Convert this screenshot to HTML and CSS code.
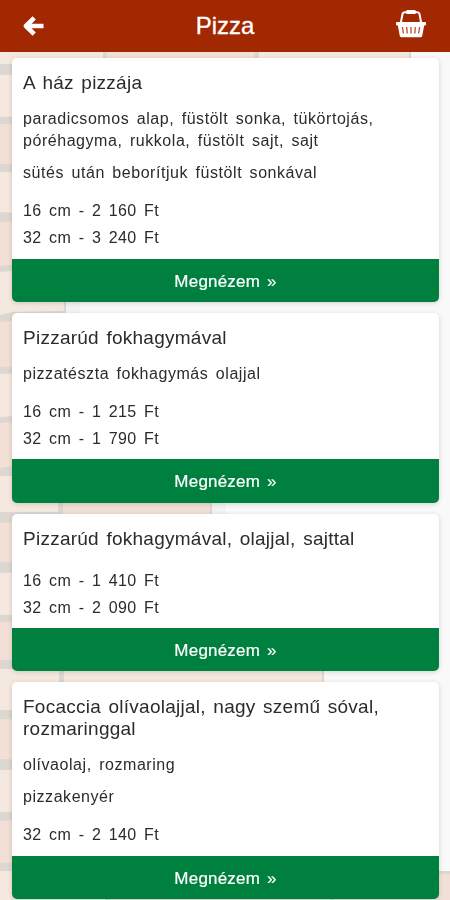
FILE: index.html
```html
<!DOCTYPE html>
<html lang="hu">
<head>
  <meta charset="UTF-8" />
  <meta name="viewport" content="width=device-width, initial-scale=1.0" />
  <title>Pizza</title>
  <link rel="stylesheet" href="styles.css">
</head>
<body>
  <!-- brick wall -->
  <svg class="wall" viewBox="0 0 450 900" preserveAspectRatio="none" aria-hidden="true">
    <path fill="#ddd7d2" d="M0 50h411v12H30v238h36v14H30v188h182v14H30v155h294v14H30v186h420v29H0z"/>
    <path fill="#f3f3f3" d="M66 300h14v14H66zM212 502h14v14H212z"/>
    <g fill="#f5e9df">
      <path d="M0 50h103v14H0zM259 50h150v10H259z"/>
      <path d="M0 75l30-1v42l-30 1zM0 172l30 1v41l-30-2z"/>
      <path d="M0 272l30-3h34v42l-52 1-12 3zM0 374l30-1v42l-30 2z"/>
      <path d="M0 476h58v36H0zM0 573l30-1v42l-30 1zM0 669h59v42l-59-1z"/>
      <path d="M64 669h258v14H64zM0 770l30-1v42l-30 1zM0 871h105v29H0z"/>
    </g>
    <g fill="#f2e0d6">
      <path d="M107 50h147v10H107zM0 124l30-1v42l-30-1zM0 222l30-2v43l-30 3z"/>
      <path d="M0 322l30-3v47l-30 1zM0 423l30-2v43l-30 4zM63 476h147v38H63z"/>
      <path d="M0 523l30-3v43l-30-1zM0 622l30-1v40l-30-1zM0 719l30 1v40l-30-1z"/>
      <path d="M0 821l30-2v43l-30 1zM110 871h220v29H110zM334 874h116v26H334z"/>
    </g>
  </svg>

  <header class="header">
    <a href="#" class="header-link" aria-label="Vissza">
      <svg class="icon-back" viewBox="0 0 21 22">
        <path d="M11.200 2.800L3 11l8.200 8.200M4 11h16.500" fill="none" stroke="#fff" stroke-width="4.600" stroke-linejoin="round"/>
      </svg>
    </a>
    <h1 class="header-title">Pizza</h1>
    <a href="#" class="header-link" aria-label="Kosár">
      <svg class="icon-basket" viewBox="0 0 30 28">
        <path d="M4.800 13L6.500 4Q6.800 2.200 8.600 2.200h12.800Q23.200 2.200 23.500 4l1.700 9" fill="none" stroke="#fff" stroke-width="2"/>
        <rect x="10" y="0" width="10" height="4" rx="1.500" fill="#fff"/>
        <path d="M1 12h28q1 0 1 1v1.500q0 1-1 1h-.8L26.200 26q-.3 1.300-1.600 1.300H5.400Q4.100 27.300 3.800 26L1.800 15.500H1q-1 0-1-1V13q0-1 1-1z" fill="#fff"/>
        <path d="M6.400 17l1 6.500M10.700 17l.5 6.500M15 17v6.500M19.300 17l-.5 6.500M23.600 17l-1 6.500" stroke="#b5502f" stroke-width="1.300"/>
      </svg>
    </a>
  </header>

  <main class="products">
    <article class="card">
      <div class="card-body">
        <h2 class="card-title">A ház pizzája</h2>
        <p class="card-text">paradicsomos alap, füstölt sonka, tükörtojás,<br>póréhagyma, rukkola, füstölt sajt, sajt</p>
        <p class="card-text">sütés után beborítjuk füstölt sonkával</p>
        <ul class="prices">
          <li>16 cm - 2 160 Ft</li>
          <li>32 cm - 3 240 Ft</li>
        </ul>
      </div>
      <a href="#" class="card-button">Megnézem »</a>
    </article>

    <article class="card">
      <div class="card-body">
        <h2 class="card-title">Pizzarúd fokhagymával</h2>
        <p class="card-text">pizzatészta fokhagymás olajjal</p>
        <ul class="prices">
          <li>16 cm - 1 215 Ft</li>
          <li>32 cm - 1 790 Ft</li>
        </ul>
      </div>
      <a href="#" class="card-button">Megnézem »</a>
    </article>

    <article class="card">
      <div class="card-body">
        <h2 class="card-title">Pizzarúd fokhagymával, olajjal, sajttal</h2>
        <ul class="prices">
          <li>16 cm - 1 410 Ft</li>
          <li>32 cm - 2 090 Ft</li>
        </ul>
      </div>
      <a href="#" class="card-button">Megnézem »</a>
    </article>

    <article class="card">
      <div class="card-body">
        <h2 class="card-title">Focaccia olívaolajjal, nagy szemű sóval,<br>rozmaringgal</h2>
        <p class="card-text">olívaolaj, rozmaring</p>
        <p class="card-text">pizzakenyér</p>
        <ul class="prices">
          <li>32 cm - 2 140 Ft</li>
        </ul>
      </div>
      <a href="#" class="card-button">Megnézem »</a>
    </article>
  </main>
</body>
</html>
```

FILE: styles.css
```css
* {
  box-sizing: border-box;
}

body {
  margin: 0;
  height: 900px;
  overflow: hidden;
  font-family: 'Liberation Sans', Arial, sans-serif;
  background: #f9f9f9;
  color: #2b2b2b;
}

.wall {
  position: fixed;
  top: 0;
  left: 0;
  width: 100%;
  height: 100%;
  z-index: -1;
}

.header {
  display: flex;
  align-items: center;
  justify-content: space-between;
  height: 52px;
  padding: 0 23px;
  background: #a12800;
  color: #fff;
}

.header-link {
  display: flex;
  width: 32px;
}

.header-link:last-child {
  justify-content: flex-end;
  padding: 0 1px 4px 0;
}

.icon-back {
  width: 21px;
  height: 22px;
}

.icon-basket {
  width: 30px;
  height: 28px;
  flex-shrink: 0;
}

.header-title {
  margin: 0;
  font-size: 24px;
  font-weight: 400;
  -webkit-text-stroke: 0.300px #fff;
}

.products {
  display: flex;
  flex-direction: column;
  gap: 11px;
  padding: 6.200px 11px 0 12px;
}

.card {
  background: #fff;
  border-radius: 5px;
  overflow: hidden;
  box-shadow: 0 1px 5px rgba(0, 0, 0, 0.16);
}

.card-body {
  display: flex;
  flex-direction: column;
  padding: 14.100px 11px 7.500px;
}

.card-title {
  margin: 0 0 14px;
  font-size: 19px;
  font-weight: 400;
  line-height: 22px;
  letter-spacing: 0.250px;
  word-spacing: 2px;
  white-space: nowrap;
}

.card-text {
  margin: 0 0 10px;
  font-size: 16px;
  line-height: 22px;
  letter-spacing: 0.550px;
  word-spacing: 2.500px;
  white-space: nowrap;
}

.prices {
  margin: 3px 0 0;
  padding: 0;
  list-style: none;
  font-size: 16px;
  line-height: 27px;
  letter-spacing: 0.450px;
  word-spacing: 2.500px;
}

.card-button {
  display: block;
  height: 43.100px;
  background: #00803f;
  color: #fff;
  font-size: 17px;
  line-height: 45px;
  text-align: center;
  text-decoration: none;
  letter-spacing: 0.200px;
  word-spacing: 2px;
  -webkit-text-stroke: 0.200px #fff;
}
```
